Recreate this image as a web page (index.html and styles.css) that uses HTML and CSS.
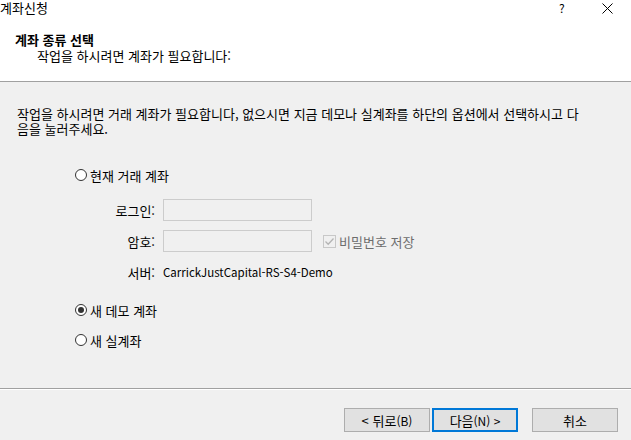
FILE: index.html
```html
<!DOCTYPE html>
<html lang="ko">
<head>
    <meta charset="UTF-8">
    <title>계좌신청</title>
    <link rel="stylesheet" href="styles.css">
</head>
<body>
    <div class="dialog">
        <!-- Header: title bar and page caption -->
        <div class="header">
            <div class="titlebar">
                <span class="title">계좌신청</span>
                <span class="help">?</span>
                <span class="close">
                    <svg width="11" height="11" viewBox="0 0 11 11"><path d="M0.5 0.5 L10.5 10.5 M10.5 0.5 L0.5 10.5" stroke="#000" stroke-width="1" fill="none"/></svg>
                </span>
            </div>
            <div class="caption">계좌 종류 선택</div>
            <div class="subcaption">작업을 하시려면 계좌가 필요합니다:</div>
        </div>

        <!-- Body -->
        <div class="content">
            <p class="intro">작업을 하시려면 거래 계좌가 필요합니다, 없으시면 지금 데모나 실계좌를 하단의 옵션에서 선택하시고 다음을 눌러주세요.</p>

            <div class="options">
                <label class="radio-row"><span class="radio"></span>현재 거래 계좌</label>

                <div class="field-row login-row">
                    <span class="field-label">로그인:</span>
                    <span class="field-input"></span>
                </div>
                <div class="field-row">
                    <span class="field-label">암호:</span>
                    <span class="field-input"></span>
                    <span class="check">
                        <span class="checkbox">
                            <svg width="11" height="11" viewBox="0 0 11 11"><path d="M1.5 5.5 L4.2 8.2 L9.5 2.5" stroke="#b4b4b4" stroke-width="1.3" fill="none"/></svg>
                        </span>
                        비밀번호 저장
                    </span>
                </div>
                <div class="field-row server-row">
                    <span class="field-label">서버:</span>
                    <span class="server">CarrickJustCapital-RS-S4-Demo</span>
                </div>

                <label class="radio-row demo-row"><span class="radio checked"></span>새 데모 계좌</label>
                <label class="radio-row real-row"><span class="radio"></span>새 실계좌</label>
            </div>
        </div>

        <!-- Footer buttons -->
        <div class="footer">
            <button class="btn">&lt; 뒤로<span class="latin">(B)</span></button>
            <button class="btn primary">다음<span class="latin">(N) &gt;</span></button>
            <button class="btn cancel">취소</button>
        </div>
    </div>
</body>
</html>
```

FILE: styles.css
```css
* {
    margin: 0;
    padding: 0;
    box-sizing: border-box;
}

body {
    font-family: "Noto Sans CJK KR", "Noto Sans", sans-serif;
    font-size: 13px;
    color: #000;
    background-color: #f0f0f0;
    width: 631px;
    height: 440px;
    overflow: hidden;
}

.latin {
    font-size: 12px;
}

.dialog {
    display: flex;
    flex-direction: column;
    height: 440px;
}

.header {
    background-color: #ffffff;
    height: 82px;
    border-bottom: 1px solid #a0a0a0;
}

.titlebar {
    display: flex;
    align-items: center;
    height: 16px;
    line-height: 16px;
}

.title {
    flex: 1;
}

.help {
    width: 14px;
    margin-right: 29px;
    font-size: 12px;
}

.close {
    display: flex;
    margin-right: 18px;
}

.caption {
    font-weight: bold;
    margin-top: 16px;
    padding-left: 15px;
    line-height: 16px;
}

.subcaption {
    padding-left: 37px;
    line-height: 16px;
}

.content {
    flex: 1;
}

.intro {
    padding: 24px 46px 0 17px;
    line-height: 15px;
}

.options {
    padding-left: 75px;
    margin-top: 30px;
}

.radio-row {
    display: flex;
    align-items: center;
    height: 18px;
    gap: 3px;
}

.radio {
    width: 12px;
    height: 12px;
    border: 1px solid #333;
    border-radius: 50%;
    background-color: #fff;
    position: relative;
}

.radio.checked::after {
    content: "";
    position: absolute;
    left: 2px;
    top: 2px;
    width: 6px;
    height: 6px;
    border-radius: 50%;
    background-color: #333;
}

.field-row {
    display: flex;
    align-items: center;
    height: 22px;
    margin-top: 9px;
}

.login-row {
    margin-top: 15px;
}

.field-label {
    width: 81px;
    text-align: right;
    padding-right: 1px;
}

.field-input {
    width: 149px;
    height: 22px;
    margin-left: 7px;
    border: 1px solid #cccccc;
    background-color: #f0f0f0;
}

.check {
    display: flex;
    align-items: center;
    gap: 3px;
    margin-left: 11px;
    color: #6d6d6d;
}

.checkbox {
    display: flex;
    width: 13px;
    height: 13px;
    border: 1px solid #c8c8c8;
    background-color: #f0f0f0;
}

.server-row {
    margin-top: 9px;
}

.server {
    margin-left: 7px;
    font-size: 11.5px;
}

.demo-row {
    margin-top: 18px;
}

.real-row {
    margin-top: 12px;
}

.footer {
    height: 52px;
    border-top: 1px solid #a0a0a0;
    box-shadow: inset 0 1px 0 #ffffff;
    display: flex;
    align-items: flex-start;
    padding: 19px 13px 0 344px;
}

.btn {
    font-family: inherit;
    font-size: 13px;
    width: 86px;
    height: 24px;
    background-color: #e1e1e1;
    border: 1px solid #adadad;
    color: #000;
}

.btn.primary {
    margin-left: 2px;
    border: 2px solid #0078d7;
}

.btn.cancel {
    margin-left: 14px;
}
```
